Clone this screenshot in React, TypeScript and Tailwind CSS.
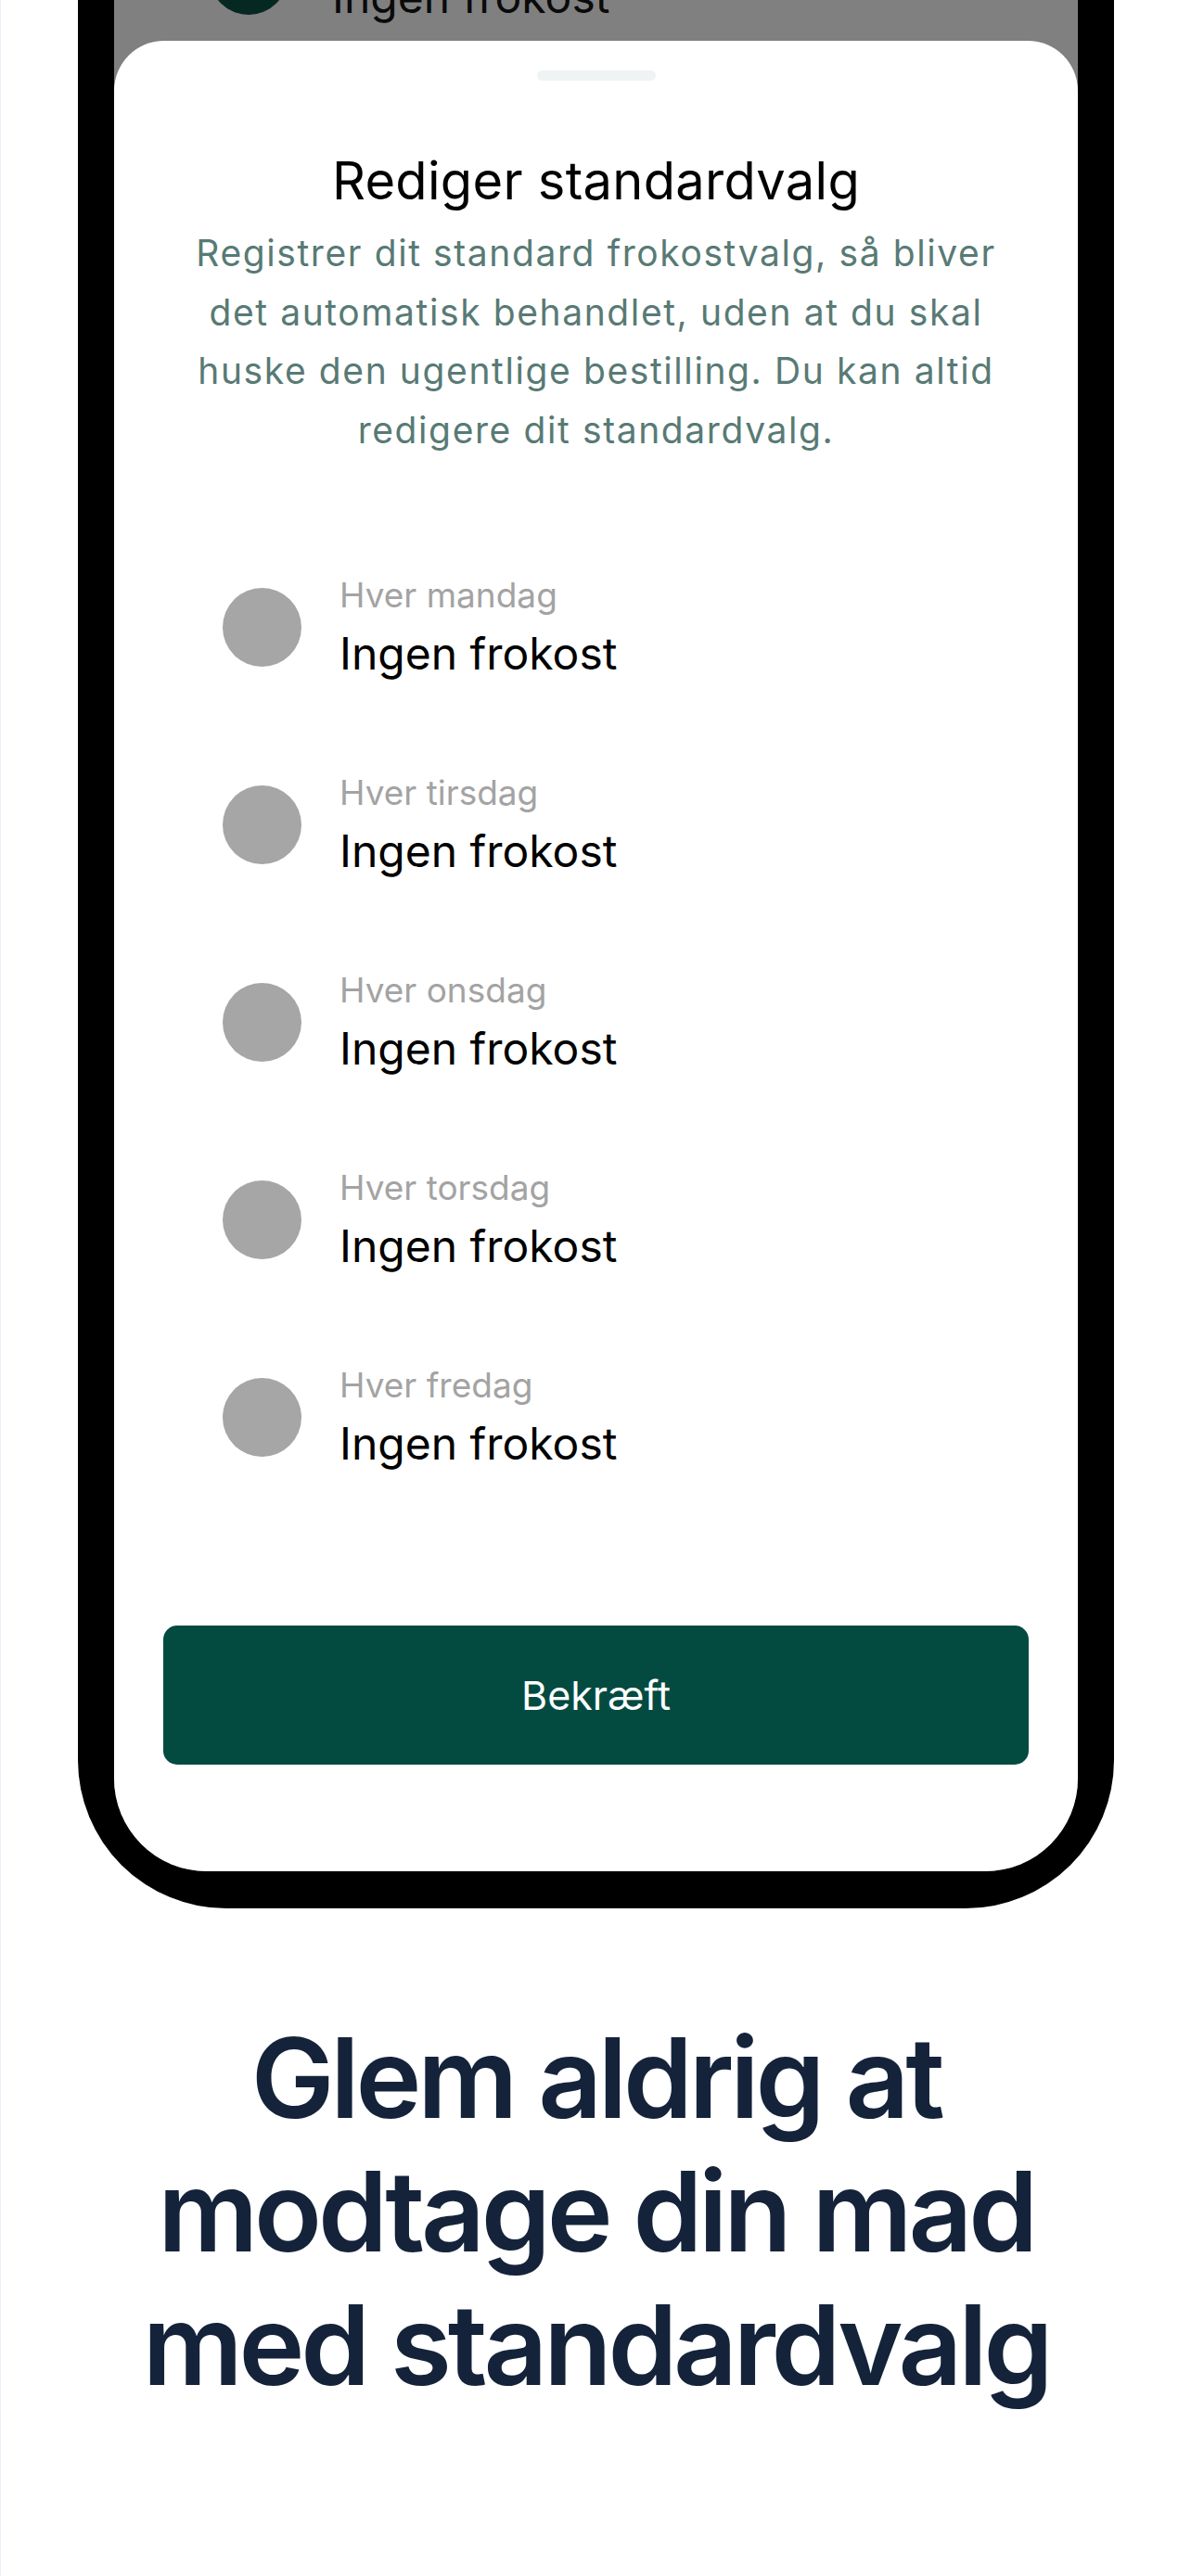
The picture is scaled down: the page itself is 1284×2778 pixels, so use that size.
import React from "react";

const days = ["mandag", "tirsdag", "onsdag", "torsdag", "fredag"];

const DayRow = ({day}: {day: string}) => (
    <div className="flex h-[213px] items-center gap-[41px]">
        <div className="size-[85px] shrink-0 rounded-full bg-[#a6a6a6]"/>
        <div className="flex flex-col">
            <span className="text-[37px] leading-[44px] text-[#a3a3a3]">Hver {day}</span>
            <span className="mt-[12px] text-[48px] leading-[58px] text-black">Ingen frokost</span>
        </div>
    </div>
);

export default function App() {
    return (
        <div className="min-h-[2778px] w-full border-l border-[#eceffb] bg-white font-['Inter',sans-serif]">
            {/* phone frame */}
            <div className="mx-auto w-[1117px] rounded-b-[160px] bg-black px-[39px] pb-[40px]">
                <div className="overflow-hidden rounded-b-[100px] bg-[#808080]">
                    {/* screen under the sheet, dimmed */}
                    <div className="h-[44px] overflow-hidden">
                        <div className="-mt-[68px] flex items-start gap-[48px] pl-[103px]">
                            <div className="size-[84px] shrink-0 rounded-full bg-[#062822]"/>
                            <span className="mt-[36px] text-[48px] leading-[58px] text-[#0a0a0a]">Ingen frokost</span>
                        </div>
                    </div>

                    {/* bottom sheet */}
                    <div className="flex flex-col rounded-t-[54px] bg-white pb-[115px]">
                        <div className="mx-auto mt-[32px] h-[11px] w-[128px] rounded-full bg-[#eff3f4]"/>
                        <h2 className="mt-[75px] text-center text-[56px] font-normal leading-[66px] tracking-[0.3px] text-black">
                            Rediger standardvalg
                        </h2>
                        <p className="mt-[13px] text-center text-[39px] leading-[63.5px] tracking-[1.6px] text-[#587a75]">
                            Registrer dit standard frokostvalg, så bliver<br/>
                            det automatisk behandlet, uden at du skal<br/>
                            huske den ugentlige bestilling. Du kan altid<br/>
                            redigere dit standardvalg.
                        </p>

                        <div className="mt-[75px] flex flex-col pl-[117px]">
                            {days.map((d) => (
                                <DayRow key={d} day={d}/>
                            ))}
                        </div>

                        <button
                            type="button"
                            className="mx-[53px] mt-[118px] h-[150px] rounded-[15px] bg-[#034b41] text-[43px] text-white">
                            Bekræft
                        </button>
                    </div>
                </div>
            </div>

            <h1 className="mt-[111px] text-center text-[120px] font-semibold leading-[144px] tracking-[-0.035em] text-[#14233a]">
                Glem aldrig at<br/>
                modtage din mad<br/>
                med standardvalg
            </h1>
        </div>
    );
}
